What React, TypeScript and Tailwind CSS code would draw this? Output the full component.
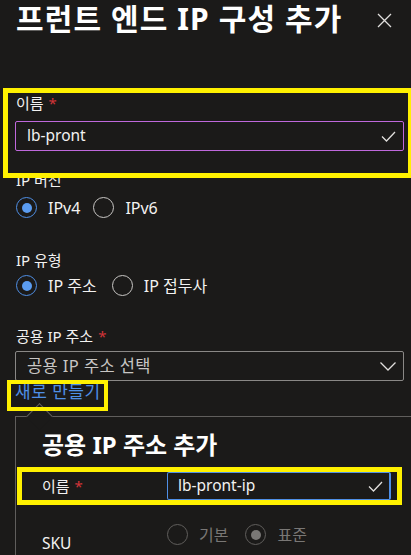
import { ReactNode } from "react";

const font = "font-['Noto_Sans','Noto_Sans_CJK_KR',sans-serif]";

function CheckMark() {
	return (
		<svg width="15" height="11" viewBox="0 0 15 11" fill="none" className="shrink-0">
			<path d="M1 5.5 L5.5 10 L14 1" stroke="#e1dfdd" strokeWidth="1.3" />
		</svg>
	);
}

function Chevron() {
	return (
		<svg width="16" height="9" viewBox="0 0 16 9" fill="none" className="shrink-0">
			<path d="M0.5 0.5 L8 8 L15.5 0.5" stroke="#e1dfdd" strokeWidth="1.3" />
		</svg>
	);
}

function Radio({ checked, disabled, label }: { checked?: boolean; disabled?: boolean; label: string }) {
	const ring = disabled ? "border-[#605e5c]" : checked ? "border-[#4f8fe6]" : "border-[#c8c6c4]";
	const dot = disabled ? "bg-[#797775]" : "bg-[#5b9cf0]";
	return (
		<div className="flex items-center">
			<div className={`w-[21px] h-[21px] rounded-full border-[1.5px] ${ring} flex items-center justify-center`}>
				{checked && <div className={`w-[10px] h-[10px] rounded-full ${dot}`} />}
			</div>
			<span className={`ml-[11px] text-[16px] leading-[20px] ${disabled ? "text-[#797775]" : "text-[#f3f2f1]"}`}>{label}</span>
		</div>
	);
}

function Label({ children, required }: { children: ReactNode; required?: boolean }) {
	return (
		<div className="text-[15px] leading-[20px] text-[#f3f2f1]">
			{children}
			{required && <span className="ml-[5px] text-[#d13438]">*</span>}
		</div>
	);
}

export default function App() {
	return (
		<div className={`relative w-[411px] h-[555px] overflow-hidden bg-[#1b1a19] ${font}`}>
			{/* header */}
			<div className="h-[38px] flex items-center justify-between pl-4 pr-[19px]">
				<h1 className="shrink-0 whitespace-nowrap text-[30px] leading-[38px] font-bold text-white tracking-[1.1px]">프런트 엔드 IP 구성 추가</h1>
				<svg width="15" height="15" viewBox="0 0 15 15" className="mt-[3px] shrink-0">
					<path d="M1 1 L14 14 M14 1 L1 14" stroke="#e1dfdd" strokeWidth="1.3" />
				</svg>
			</div>

			<div className="pl-[15px] pr-[7px]">
				<div className="mt-[55px] pl-px">
					<Label required>이름</Label>
				</div>
				<div className="mt-[8px] h-[30px] border border-[#bf68dc] rounded-[2px] flex items-center justify-between pl-[11px] pr-[7px]">
					<span className="text-[15.5px] text-[#f3f2f1]">lb-pront</span>
					<CheckMark />
				</div>

				<div className="mt-[19px] pl-px">
					<Label>IP 버전</Label>
				</div>
				<div className="mt-[7px] flex gap-[13px] pl-px">
					<Radio checked label="IPv4" />
					<Radio label="IPv6" />
				</div>

				<div className="mt-[32px] pl-px">
					<Label>IP 유형</Label>
				</div>
				<div className="mt-[5px] flex gap-[15px] pl-px">
					<Radio checked label="IP 주소" />
					<Radio label="IP 접두사" />
				</div>

				<div className="mt-[30px] pl-px">
					<Label required>공용 IP 주소</Label>
				</div>
				<div className="mt-[5px] h-[30px] border border-[#8a8886] rounded-[2px] flex items-center justify-between pl-[11px] pr-[7px]">
					<span className="text-[16.5px] tracking-[0.4px] text-[#c8c6c4]">공용 IP 주소 선택</span>
					<Chevron />
				</div>
				<div className="mt-[1px] text-[17px] leading-[20px] tracking-[0.5px] text-[#4f8fe6]">새로 만들기</div>

				{/* callout panel */}
				<div className="relative mt-[14px] w-[410px] h-[160px] border-l border-t border-[#605e5c] pl-[26px] pt-[12px]">
					<div className="absolute -top-[10px] left-[14px] w-[19px] h-[19px] rotate-45 bg-[#1b1a19] border-l border-t border-[#605e5c]" />
					<div className="relative text-[24px] leading-[32px] font-bold text-white">공용 IP 주소 추가</div>
					<div className="mt-[11px] flex items-center">
						<div className="w-[125px]">
							<Label required>이름</Label>
						</div>
						<div className="w-[224px] h-[28px] border border-[#4f8fe6] border-r-2 rounded-[2px] flex items-center justify-between pl-[10px] pr-[6px]">
							<span className="text-[15.5px] text-[#f3f2f1]">lb-pront-ip</span>
							<CheckMark />
						</div>
					</div>
					<div className="mt-[24px] flex items-start">
						<div className="w-[125px] pt-[9px] text-[15.5px] leading-[20px] text-[#f3f2f1]">SKU</div>
						<div className="flex gap-[17px]">
							<Radio disabled label="기본" />
							<Radio disabled checked label="표준" />
						</div>
					</div>
				</div>
			</div>

			{/* yellow annotation boxes */}
			<div className="absolute left-[3px] top-[88px] w-[410px] h-[90px] border-[5px] border-[#fff100] pointer-events-none" />
			<div className="absolute left-[7px] top-[380px] w-[101px] h-[31px] border-[4px] border-[#fff100] pointer-events-none" />
			<div className="absolute left-[17px] top-[467px] w-[385px] h-[38px] border-[5px] border-[#fff100] pointer-events-none" />
		</div>
	);
}
